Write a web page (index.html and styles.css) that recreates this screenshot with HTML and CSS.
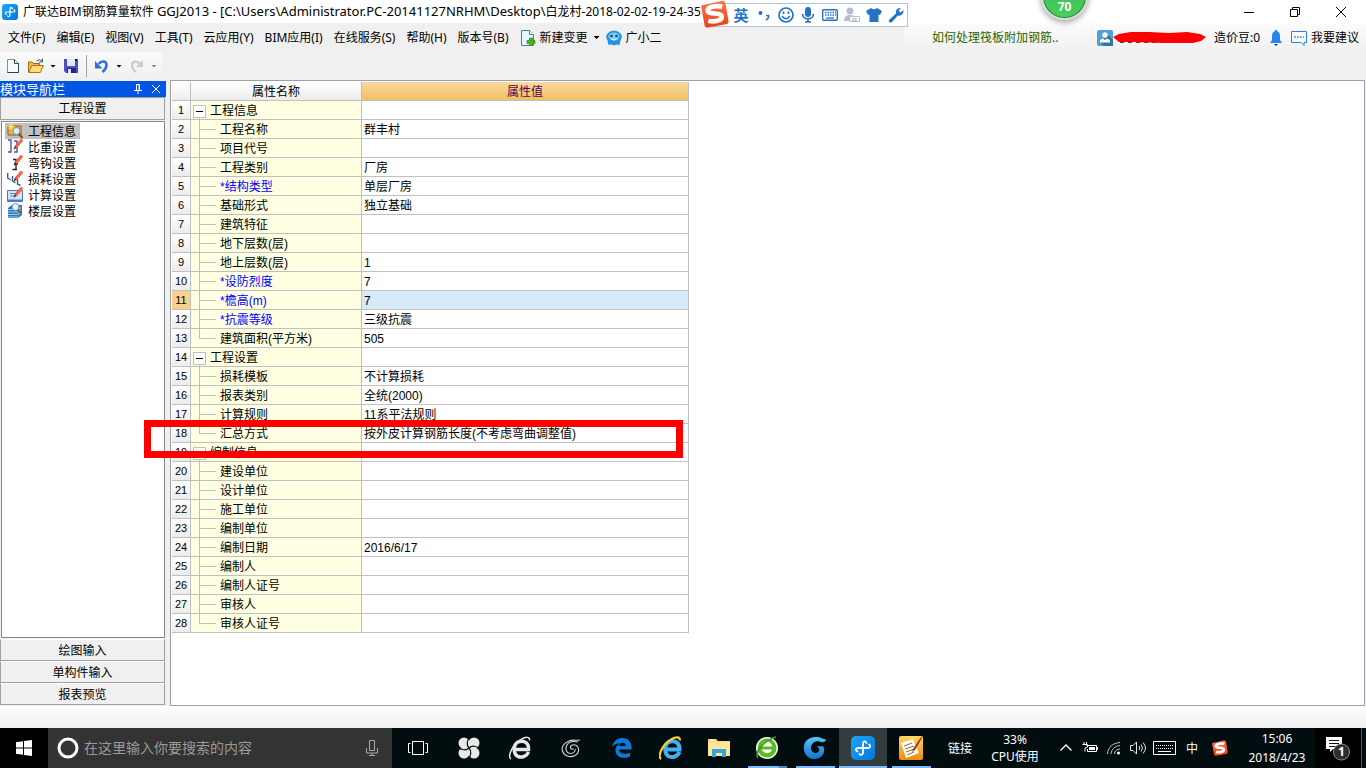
FILE: index.html
```html
<!DOCTYPE html>
<html lang="zh-CN">
<head>
<meta charset="utf-8">
<title>广联达BIM钢筋算量软件 GGJ2013</title>
<link rel="stylesheet" href="styles.css">
</head>
<body>
<svg class="defs" aria-hidden="true">
  <defs>
    <linearGradient id="g-app" x1="0" y1="0" x2="1" y2="1"><stop offset="0" stop-color="#1ea4fa"/><stop offset="1" stop-color="#0478d8"/></linearGradient>
    <linearGradient id="g-sogou" x1="0" y1="0" x2="0" y2="1"><stop offset="0" stop-color="#f77a4a"/><stop offset="1" stop-color="#ee3f13"/></linearGradient>
    <linearGradient id="g-blue" x1="0" y1="0" x2="0" y2="1"><stop offset="0" stop-color="#5cc4f5"/><stop offset="1" stop-color="#1173cf"/></linearGradient>
    <linearGradient id="g-note" x1="0" y1="0" x2="0" y2="1"><stop offset="0" stop-color="#ffd65c"/><stop offset="1" stop-color="#ee8a10"/></linearGradient>
    <symbol id="app" viewBox="0 0 24 24"><rect width="24" height="24" rx="5" fill="url(#g-app)"/><path d="M15.500 7C14.500 4.500 12 5 12 8v8.500c0 2.500-2.500 3-3.500 1.500M6.500 15.500C4 14.500 4.500 12 7 12h10c2.500 0 3-2.500 1-3.500" fill="none" stroke="#fff" stroke-width="1.800" stroke-linecap="round"/></symbol>
    <symbol id="sogou" viewBox="0 0 27 27"><path d="M1 5 20 1c2-.4 3 .4 3.500 2l3 17c.3 2-.6 3-2.500 3.500L7 26.500c-2 .4-3-.4-3.500-2L.5 8C.2 6.500 0 5.300 1 5Z" fill="url(#g-sogou)"/><path d="M20.500 6.500C14 5 6 7 6.500 10.500 7 14.500 19.500 11.500 20 16c.4 4-7 5.500-13 4" fill="none" stroke="#fff" stroke-width="4.500"/></symbol>
    <symbol id="pencil" viewBox="0 0 10 12"><path d="M8.500 0 10 2 3.500 9.500 1.500 8Z" fill="#ee4a30" stroke="#ee4a30"/><path d="M8.800 0 9.600 1 3 8.500" fill="none" stroke="#ff9a80"/><path d="M1.500 8 3.500 9.500 0 12Z" fill="#3a2a24"/></symbol>
  </defs>
</svg>

<header class="titlebar">
  <svg class="i16" viewBox="0 0 24 24"><use href="#app"/></svg>
  <h1>广联达BIM钢筋算量软件 <span class="path">GGJ2013 - [C:\Users\Administrator.PC-20141127NRHM\Desktop\</span>白龙村-2018-02-02-19-24-35</h1>
  <div class="winbtns">
    <button aria-label="最小化"><svg class="i12" viewBox="0 0 12 12"><path d="M1 6.500h10" stroke="#000"/></svg></button>
    <button aria-label="还原"><svg class="i12" viewBox="0 0 12 12"><path d="M1.500 3.500h7v7h-7zM3.500 3.500v-2h7v7h-2" fill="none" stroke="#000"/></svg></button>
    <button aria-label="关闭"><svg class="i12" viewBox="0 0 12 12"><path d="m1 1 10 10M11 1 1 11" stroke="#000"/></svg></button>
  </div>
</header>

<nav class="menubar">
  <div class="menus">
    <button>文件(F)</button><button>编辑(E)</button><button>视图(V)</button><button>工具(T)</button><button>云应用(Y)</button><button>BIM应用(I)</button><button>在线服务(S)</button><button>帮助(H)</button><button>版本号(B)</button>
    <button class="withicon"><svg class="i16" viewBox="0 0 16 16"><path d="M1.500.5h8l4 4v11h-12z" fill="#e9f6fc" stroke="#3b84b0"/><path d="M9.500.5v4h4" fill="#fff" stroke="#3b84b0"/><path d="M9.500 8h3v2.500H15v3h-2.500V16h-3v-2.500H7v-3h2.500z" fill="#4fae22" stroke="#2d7c10" stroke-width=".6"/></svg>新建变更<i class="caret"></i></button>
    <button class="withicon mascot"><svg class="i16" viewBox="0 0 16 16"><path d="M4 1.500 8 .5l4 1L15 4l1 3-1.500 3.500L13.500 15l-3-.5-2.500 1-2.500-1-3 .5-1-4.500L0 7l1-3Z" fill="#2591df"/><ellipse cx="8" cy="6.500" rx="5.500" ry="4" fill="#77cdf5"/><circle cx="5.500" cy="6" r="1.300" fill="#104a86"/><circle cx="10.500" cy="6" r="1.300" fill="#104a86"/><path d="M5.500 9q2.500 2 5 0" fill="none" stroke="#fff"/></svg>广小二</button>
  </div>
  <a class="news" href="#">如何处理筏板附加钢筋..</a>
  <div class="account">
    <svg class="i16" viewBox="0 0 16 16"><rect width="16" height="16" rx="2" fill="#4ba3d3"/><path d="m11 5 5 5v6H7l-4-4z" fill="#3176a0"/><circle cx="8" cy="5" r="2.700" fill="#fff"/><path d="M3 12.500V10l3-1.500 2 1.500 2-1.500 3 1.500v2.500z" fill="#fff"/></svg>
    <svg class="scribble" viewBox="0 0 94 12"><path d="M7 10.500h70" stroke="#445" stroke-dasharray="4 4"/><path d="M0 5 6 2 18 0h18l20 1 18-1 13 2 6 3-5 4-8 2H50l-30-1H6Z" fill="#f00"/></svg>
    <span class="beans">造价豆:0</span>
    <svg class="bell" viewBox="0 0 12 16"><path d="M6 0c1 0 1.500.7 1.500 1.500C9.500 2 10 4 10 6v4l2 3H0l2-3V6c0-2 .5-4 2.500-4.500C4.500.7 5 0 6 0Z" fill="#2786ee"/><path d="M4 14h4L6 16Z" fill="#0d3566"/></svg>
    <a class="advice" href="#"><svg class="i16" viewBox="0 0 16 16"><path d="M.5 1.500h15v11H13v3l-3-3H.5z" fill="#f5faff" stroke="#2b82dc"/><path d="M3 7h10" stroke="#1c5fae" stroke-dasharray="2 1"/></svg>我要建议</a>
  </div>
</nav>

<div class="toolbar">
  <button aria-label="新建"><svg class="i16" viewBox="0 0 16 16"><path d="M2.500 1.500h7l4 4v9h-11z" fill="#f6fbff" stroke="#7890a8"/><path d="M9.500 1.500v4h4v9h-11" fill="none" stroke="#2c4258"/></svg></button>
  <button aria-label="打开"><svg class="i16" viewBox="0 0 16 16"><path d="M.5 14V4h4l1 1.500h6V14Z" fill="#eebb44" stroke="#9a6b12"/><path d="m.8 14.500 3-7h11.500l-3 7z" fill="#ffdc78" stroke="#a87510"/><path d="M8.500 3q3-3 5.500 0M14.500.5V4H11" fill="none" stroke="#385878"/></svg><i class="caret"></i></button>
  <button aria-label="保存"><svg class="i16" viewBox="0 0 16 16"><path d="M1 1h14v14H3l-2-2z" fill="#4a4fc8"/><path d="M4 1h8v7H4z" fill="#e3e9fb"/><path d="M12 1h2v2h-2z" fill="#141550"/><path d="M4 10h9v5H4z" fill="#222a70"/><path d="M5 11h3v4H5z" fill="#dde"/></svg></button>
  <span class="sep"></span>
  <button aria-label="撤销"><svg class="i16" viewBox="0 0 16 16"><path d="M4.500 6C8 2 12.500 3 12.500 7c0 2.500-1.500 5-4 7" fill="none" stroke="#2f72d0" stroke-width="2.600"/><path d="M1 3v7.500h7.500z" fill="#2f72d0"/></svg><i class="caret"></i></button>
  <button aria-label="恢复"><svg class="i16" viewBox="0 0 16 16"><path d="M11 6C8 2.500 3 3 3 7c0 2.500 1.500 5 4 7" fill="none" stroke="#cbcbcb" stroke-width="2.200"/><path d="M14 2v7H7z" fill="#cbcbcb"/></svg><i class="caret off"></i></button>
</div>

<main class="work">
  <aside class="side">
    <div class="sidehead"><h2>模块导航栏</h2>
      <button aria-label="固定"><svg class="i10" viewBox="0 0 10 10"><path d="M3.500 6V.5h3V6M1 6.500h8M5 6.500V10M6 1v5" fill="none" stroke="#fff"/></svg></button>
      <button aria-label="关闭"><svg class="i10" viewBox="0 0 10 10"><path d="m1 1 8 8M9 1 1 9" stroke="#fff"/></svg></button>
    </div>
    <button class="tab top">工程设置</button>
    <ul class="items">
      <li><a class="on" href="#"><svg class="i16" viewBox="0 0 16 16"><path d="M1 3h13v9H1z" fill="#e6b250" stroke="#9a5c12"/><path d="M4 0v7M.5 3.500h7M1.500 1l5 5M6.500 1l-5 5" stroke="#fff064"/><circle cx="9.500" cy="8" r="3.500" fill="#dceefa" stroke="#6d93b8"/><path d="m12 11 3.500 4" stroke="#8a4a10" stroke-width="2"/></svg><span>工程信息</span></a></li>
      <li><a href="#"><svg class="i16" viewBox="0 0 16 16"><path d="M1 1h3v12H1M7 2h3v11H7" fill="none" stroke="#3b5f9c" stroke-width="1.400"/><use href="#pencil" x="6" y="0" width="10" height="11"/></svg><span>比重设置</span></a></li>
      <li><a href="#"><svg class="i16" viewBox="0 0 16 16"><path d="M6 4.500h3v10M5.500 14.500H10M7 9h4" fill="none" stroke="#222" stroke-width="1.300"/><use href="#pencil" x="6" y="0" width="10" height="11"/></svg><span>弯钩设置</span></a></li>
      <li><a href="#"><svg class="i16" viewBox="0 0 16 16"><path d="M.7 2v5l3 2M5.500 5v5l3 2M10.500 8v5l3 1.500" fill="none" stroke="#3b5f9c" stroke-width="1.400"/><use href="#pencil" x="6" y="0" width="10" height="11"/></svg><span>损耗设置</span></a></li>
      <li><a href="#"><svg class="i16" viewBox="0 0 16 16"><path d="M.5 3.500h15v11H.5z" fill="#d3e4fa" stroke="#4d78b4"/><path d="M1 13.500h14" stroke="#477ec8" stroke-width="2"/><path d="M3 6.500h5M3 9h4" stroke="#5c83bc"/><use href="#pencil" x="6" y="0" width="10" height="11"/></svg><span>计算设置</span></a></li>
      <li><a href="#"><svg class="i16" viewBox="0 0 16 16"><path d="M1 5 5 2h10v10l-4 3H1z" fill="#2a78c0"/><path d="M1 6.500h10l3-2M1 9h10l3-2M1 11.500h10l3-2M1 14h10" fill="none" stroke="#9ad2f3" stroke-width="1.200"/><circle cx="8.500" cy="4" r="3.500" fill="#e6f0f6" stroke="#7590a4"/><path d="m11 7 3 3" stroke="#864c1b" stroke-width="2"/></svg><span>楼层设置</span></a></li>
    </ul>
    <div class="tabs">
      <button class="tab">绘图输入</button>
      <button class="tab">单构件输入</button>
      <button class="tab">报表预览</button>
    </div>
  </aside>

  <section class="sheet">
    <table>
      <colgroup><col class="c-no"><col class="c-name"><col class="c-value"></colgroup>
      <thead><tr><th></th><th>属性名称</th><th class="cur">属性值</th></tr></thead>
      <tbody>
        <tr class="group"><th>1</th><td><button aria-label="折叠"></button>工程信息</td><td></td></tr>
        <tr><th>2</th><td>工程名称</td><td>群丰村</td></tr>
        <tr><th>3</th><td>项目代号</td><td></td></tr>
        <tr><th>4</th><td>工程类别</td><td>厂房</td></tr>
        <tr class="key"><th>5</th><td>*结构类型</td><td>单层厂房</td></tr>
        <tr><th>6</th><td>基础形式</td><td>独立基础</td></tr>
        <tr><th>7</th><td>建筑特征</td><td></td></tr>
        <tr><th>8</th><td>地下层数(层)</td><td></td></tr>
        <tr><th>9</th><td>地上层数(层)</td><td>1</td></tr>
        <tr class="key"><th>10</th><td>*设防烈度</td><td>7</td></tr>
        <tr class="key sel"><th>11</th><td>*檐高(m)</td><td>7</td></tr>
        <tr class="key"><th>12</th><td>*抗震等级</td><td>三级抗震</td></tr>
        <tr class="last"><th>13</th><td>建筑面积(平方米)</td><td>505</td></tr>
        <tr class="group"><th>14</th><td><button aria-label="折叠"></button>工程设置</td><td></td></tr>
        <tr><th>15</th><td>损耗模板</td><td>不计算损耗</td></tr>
        <tr><th>16</th><td>报表类别</td><td>全统(2000)</td></tr>
        <tr><th>17</th><td>计算规则</td><td>11系平法规则</td></tr>
        <tr class="last"><th>18</th><td>汇总方式</td><td>按外皮计算钢筋长度(不考虑弯曲调整值)</td></tr>
        <tr class="group"><th>19</th><td><button aria-label="折叠"></button>编制信息</td><td></td></tr>
        <tr><th>20</th><td>建设单位</td><td></td></tr>
        <tr><th>21</th><td>设计单位</td><td></td></tr>
        <tr><th>22</th><td>施工单位</td><td></td></tr>
        <tr><th>23</th><td>编制单位</td><td></td></tr>
        <tr><th>24</th><td>编制日期</td><td>2016/6/17</td></tr>
        <tr><th>25</th><td>编制人</td><td></td></tr>
        <tr><th>26</th><td>编制人证号</td><td></td></tr>
        <tr><th>27</th><td>审核人</td><td></td></tr>
        <tr class="last"><th>28</th><td>审核人证号</td><td></td></tr>
      </tbody>
    </table>
    <div class="marker"></div>
  </section>
</main>
<div class="statusbar"></div>

<footer class="taskbar">
  <button class="start" aria-label="开始"><svg class="i16" viewBox="0 0 16 16"><path d="M0 2.200 7 1.200v6.300H0zM8 1l8-1v7.500H8zM0 8.500h7v6.300l-7-1zM8 8.500h8V16l-8-1z" fill="#fff"/></svg></button>
  <label class="search">
    <svg class="ring" viewBox="0 0 22 22"><circle cx="11" cy="11" r="9" fill="none" stroke="#fff" stroke-width="3"/></svg>
    <input type="text" aria-label="搜索" placeholder="在这里输入你要搜索的内容">
    <svg class="i16" viewBox="0 0 16 16"><path d="M5.500.5h5v10h-5zM2.500 8v5h11V8M8 13v2.500M5 15.500h6" fill="none" stroke="#a8a8a8"/></svg>
  </label>
  <div class="pins">
    <button aria-label="任务视图"><svg class="i20" viewBox="0 0 20 20"><path d="M4.500 3.500h11v13h-11zM2.500 5.500h-2v9h2M17.500 5.500h2v9h-2" fill="none" stroke="#fff"/></svg></button>
    <button aria-label="四叶"><svg class="i24" viewBox="0 0 24 24"><g fill="#e8e8e8"><circle cx="7" cy="7" r="5.500"/><circle cx="17" cy="7" r="5.500"/><circle cx="7" cy="17" r="5.500"/><circle cx="17" cy="17" r="5.500"/><path d="M7 4h10v16H7z"/></g><path d="M12 12C9 9 10 4 13 1M12 12c3-3 8-2 11 1M12 12c3 3 2 8-1 11M12 12c-3 3-8 2-11-1" fill="none" stroke="#081012" stroke-width="1.200"/></svg></button>
    <button aria-label="浏览器"><svg class="i24" viewBox="0 0 24 24"><path d="M20.500 16C19 20 14 22 10 20.500c-5-2.500-5-12 0-14.500 6-2.500 11 1 10.500 7.500H7" fill="none" stroke="#e8e8e8" stroke-width="3.500"/><path d="M3 23C-1 20 5 8 13 3.500c5-3 9-3 8.500 1" fill="none" stroke="#e8e8e8" stroke-width="1.500"/></svg></button>
    <button aria-label="旋风"><svg class="i20" viewBox="0 0 20 20"><path d="M19 2c-4 1-7-1-11 1C3 5 0 9 1.500 13 3 18 9 20 14 17.500c5-3 4.500-9 0-10.500-3-.8-5 1-4.500 3 .5 1.500 2.500 1.500 3 .5M17 4C12 3 7 4 5.500 8 4 12 6 15.500 9.500 15.500c3.500 0 5-2.500 4.500-4.500" fill="none" stroke="#d6d6d6" stroke-width="1.100"/></svg></button>
    <button aria-label="Edge"><svg class="i20" viewBox="0 0 20 20"><path d="M0 9C1.500 2.500 6 0 10.500 0 16.500 0 20 4.500 19.500 11.500H7c0 4 6 6 11 3v4C13 21 4 20.500 3.500 13 3.200 9 6 6.500 8 5.500 4.500 5 2 6.500 0 9Zm7-1h7c0-4-6-4.500-7 0Z" fill="#0c78d7"/></svg></button>
  </div>
  <div class="apps">
    <button aria-label="Internet Explorer"><svg class="i24" viewBox="0 0 24 24"><path d="M20.500 16C19 20 14 22 10 20.500c-5-2.500-5-12 0-14.500 6-2.500 11 1 10.500 7.500H7" fill="none" stroke="#41b1ef" stroke-width="4"/><path d="M2 23C-2 20 4 8 12 3.500c5-3 9-3 9 1" fill="none" stroke="#f8cd2d" stroke-width="2.200"/></svg></button>
    <button aria-label="资源管理器"><svg class="i24" viewBox="0 0 24 24"><path d="M1 3h8l2 2h12v15H1z" fill="#f6d77c"/><path d="M1 6h22v14H1z" fill="#ffe79a"/><path d="M5 21v-8h14v8h-4v-4H9v4z" fill="#35a5dc"/><path d="M3 4h4" stroke="#fff"/></svg></button>
    <button class="run multi" aria-label="安全浏览器"><svg class="i24" viewBox="0 0 24 24"><circle cx="12" cy="12" r="11" fill="#f4fbee"/><circle cx="12" cy="12" r="9.500" fill="#5abb26"/><path d="M7 10.500a5 5 0 0 1 10 0ZM7 13.500h10c-1.500 5-8.500 5-10 0Z" fill="#fff"/><path d="M3 22C-1 16 10 4 21 1" fill="none" stroke="#3f9d1a" stroke-width="1.600"/></svg></button>
    <button class="run" aria-label="广联达"><svg class="i24" viewBox="0 0 24 24"><path d="M23 3c-3 1-4-2-10-2C5 1 0 6 1 14c1 6 6 10 12 9 7-1 10-8 7-13-2 1-4 0-6 0 1 2 3 2 2 5-2 4-8 2-8-3s5-8 10-6c3 1 5-1 5-3Z" fill="url(#g-blue)"/></svg></button>
    <button class="run active" aria-label="钢筋算量"><svg class="i24" viewBox="0 0 24 24"><use href="#app"/></svg></button>
    <button class="run" aria-label="便笺"><svg class="i24" viewBox="0 0 24 24"><rect width="24" height="24" rx="2" fill="url(#g-note)"/><path d="m2 7 12-4 6 14-13 5z" fill="#fffdf1"/><path d="m5 10 8-3M6 13l9-3M7 16l8-3M8 19l7-3" stroke="#8c6a40"/><path d="m22 1-8 12-1 3 3-2 7-12z" fill="#9c3614"/></svg></button>
  </div>
  <a class="links" href="#">链接</a>
  <div class="cpu">33%<br>CPU使用</div>
  <div class="tray">
    <button aria-label="显示隐藏的图标"><svg class="i16" viewBox="0 0 16 16"><path d="m2.500 10.500 5.500-5.500 5.500 5.500" fill="none" stroke="#fff" stroke-width="1.300"/></svg></button>
    <button aria-label="电池"><svg class="i16" viewBox="0 0 16 16"><path d="M4.500 5.500h10v6h-9V9M2 2v3M4.500 2v3M.5 4.500h5V7L3 8v3.500" fill="none" stroke="#fff"/><path d="M7 7h6v3H7zM15 7h1v3h-1z" fill="#fff"/></svg></button>
    <button aria-label="网络"><svg class="i16" viewBox="0 0 16 16"><path d="M1.500 14C2 7 7 3 14 2.500M5 14C5.500 9 9 6 14 5.500M8.500 14c0-3 2.500-5 5.500-5" fill="none" stroke="#c4c8c8"/><circle cx="12.500" cy="13" r="1.500" fill="#fff"/></svg></button>
    <button aria-label="音量"><svg class="i16" viewBox="0 0 16 16"><path d="M.5 5.500h2.500L6.500 2v12L3 10.500H.5zM9 6q1.500 2 0 4M11 4.500q3 3.500 0 7M13 2.500q5 5.500 0 11" fill="none" stroke="#e8e8e8"/></svg></button>
    <button class="wide" aria-label="键盘"><svg class="kb" viewBox="0 0 23 14"><path d="M.5.500h22v13H.5z" fill="none" stroke="#fff"/><path d="M3 4.500h17M3 7.500h17" stroke="#fff" stroke-dasharray="1 1"/><path d="M5 10.500h13" stroke="#fff"/></svg></button>
    <button class="wide">中</button>
    <button class="wide" aria-label="搜狗"><svg class="i16" viewBox="0 0 27 27"><use href="#sogou"/></svg></button>
  </div>
  <div class="clock">15:06<br>2018/4/23</div>
  <button class="notice" aria-label="通知"><svg viewBox="0 0 26 26"><path d="M1 2h16v12H8l-3 3v-3H1z" fill="#fff"/><path d="M4 5.500h10M4 8.500h10M4 11.500h6" stroke="#111"/><circle cx="16.500" cy="17" r="8" fill="#2d2d2d" stroke="#8c8c8c"/></svg><b>1</b></button>
</footer>

<div class="ime">
  <svg class="imelogo" viewBox="0 0 27 27"><use href="#sogou"/></svg>
  <button class="lang">英</button>
  <button aria-label="标点"><svg class="i16" viewBox="0 0 16 16"><circle cx="4.500" cy="6" r="2" fill="#2573c4"/><path d="M10 8.500h2.500c.5 2-.5 3.500-2.500 4.500" fill="none" stroke="#2573c4" stroke-width="1.600"/></svg></button>
  <button aria-label="表情"><svg class="i16" viewBox="0 0 16 16"><circle cx="8" cy="8" r="7" fill="none" stroke="#2573c4" stroke-width="1.700"/><path d="M4 9q4 5.500 8 0" fill="none" stroke="#2573c4" stroke-width="1.400"/><path d="M5.500 4.500v2.500M10.500 4.500v2.500" stroke="#2573c4" stroke-width="1.700"/></svg></button>
  <button aria-label="语音"><svg class="i16" viewBox="0 0 16 16"><rect x="5" width="6" height="10" rx="3" fill="#2573c4"/><path d="M2.500 7c0 6.500 11 6.500 11 0M8 12v3M5 15h6" fill="none" stroke="#2573c4" stroke-width="1.700"/></svg></button>
  <button aria-label="软键盘"><svg class="i16" viewBox="0 0 16 16"><rect x=".7" y="2.700" width="14.600" height="10.600" rx="1" fill="#fff" stroke="#2573c4" stroke-width="1.400"/><path d="M3 5.500h11M3 8h11" stroke="#2573c4" stroke-width="1.500" stroke-dasharray="1.500 1"/><path d="M4 11h8" stroke="#2573c4" stroke-width="1.300"/></svg></button>
  <button aria-label="账号"><svg class="i16" viewBox="0 0 16 16"><g fill="#b3bdd0"><circle cx="6" cy="4" r="3.500"/><path d="M0 14c0-5 3-6 6-6s4 1 4 1v5Z"/></g><path d="M5.500 9.500h10v5h-10zM8 11.500h2v2H8M13 11.500h-2v2h2" fill="#fff" stroke="#b3bdd0"/></svg></button>
  <button aria-label="皮肤"><svg class="i16" viewBox="0 0 16 16"><path d="M5 1q3 2.500 6 0l5 3-2 4-1.500-.5V15h-9V7.500L2 8 0 4Z" fill="#2573c4"/></svg></button>
  <button aria-label="工具"><svg class="i16" viewBox="0 0 16 16"><path d="M1 13 8 6.500C7 3 9.500.5 13 1l-2.500 2.500 2 2L15.500 3C16 7 13 9.500 9.800 8.500L4 15c-2 1.500-4-.5-3-2Z" fill="#2573c4"/></svg></button>
</div>
<div class="ball">70</div>
</body>
</html>
```
FILE: styles.css
```css
* { box-sizing: border-box; }
body {
  margin: 0;
  height: 100vh;
  display: flex;
  flex-direction: column;
  overflow: hidden;
  position: relative;
  background: #f0f0f0;
  color: #000;
  font: 12px/18px "Noto Sans", "Noto Sans CJK SC", sans-serif;
}
button {
  margin: 0;
  padding: 0;
  border: 0;
  background: none;
  color: inherit;
  font: inherit;
  white-space: nowrap;
}
a { color: inherit; text-decoration: none; }
svg { display: block; flex: none; }
h1, h2 { margin: 0; font: inherit; }
.defs { position: absolute; width: 0; height: 0; }
.i10 { width: 10px; height: 10px; }
.i12 { width: 12px; height: 12px; }
.i16 { width: 16px; height: 16px; }
.i20 { width: 20px; height: 20px; }
.i24 { width: 24px; height: 24px; }
.kb { width: 23px; height: 14px; }
.caret {
  width: 6px;
  height: 3px;
  background: #000;
  clip-path: polygon(0 0, 100% 0, 50% 100%);
}
.caret.off { background: #888; }

.titlebar {
  flex: none;
  display: flex;
  align-items: center;
  gap: 5px;
  height: 23px;
  padding-left: 2px;
  background: #fff;
}
.titlebar h1 { white-space: nowrap; flex: 1; }
.path { font-size: 13px; }
.winbtns { display: flex; align-items: center; padding-right: 2px; }
.winbtns button { width: 46px; height: 20px; display: grid; place-items: center; }

.menubar { flex: none; display: flex; height: 29px; }
.menus { flex: 1; display: flex; align-items: center; gap: 11px; padding-left: 8px; }
.withicon { display: flex; align-items: center; gap: 4px; }
.withicon .caret { margin-left: 2px; }
.mascot { margin-left: -5px; }
.news, .account {
  display: flex;
  align-items: center;
  background: linear-gradient(#fcfcfc, #f0f0f0);
  white-space: nowrap;
}
.news { width: 188px; padding-left: 28px; margin-right: 1px; color: #2b6400; }
.account { width: 273px; padding-left: 4px; }
.scribble { width: 94px; height: 12px; }
.beans { margin-left: 7px; }
.bell { width: 12px; height: 16px; margin: 0 9px 0 10px; }
.advice { display: flex; align-items: center; gap: 4px; }

.toolbar {
  flex: none;
  align-self: flex-start;
  display: flex;
  align-items: center;
  gap: 7px;
  height: 28px;
  padding: 0 6px 0 5px;
  background: linear-gradient(#fafafa, #f0f0f0);
}
.toolbar button { display: flex; align-items: center; gap: 6px; }
.sep { width: 1px; height: 22px; background: #a0a0a0; }

.work { flex: 1; min-height: 0; display: flex; gap: 4px; padding-right: 1px; }
.side { width: 166px; flex: none; display: flex; flex-direction: column; padding: 1px 1px 1px 0; }
.sidehead {
  display: flex;
  align-items: center;
  gap: 8px;
  height: 16px;
  margin-right: -1px;
  padding-right: 5px;
  background: #0055e5;
  color: #fff;
}
.sidehead h2 { flex: 1; font-size: 13px; line-height: 16px; }
.tab {
  display: block;
  width: 100%;
  height: 22px;
  padding-top: 1px;
  border: 1px solid #a0a0a0;
  border-top-color: #fff;
  background: #f0f0f0;
  text-align: center;
}
.tab.top { height: 23px; border-top-color: #a0a0a0; }
.items {
  flex: 1;
  list-style: none;
  margin: 1px 0 1px 1px;
  padding: 1px 3px;
  border: 1px solid #828790;
  background: #fff;
}
.items a { display: flex; align-items: center; width: 75px; height: 16px; padding-left: 2px; }
.items span { padding: 1px 0 0 5px; line-height: 16px; }
.items .on { background: #c0c0c0; }

.sheet {
  flex: 1;
  position: relative;
  border: 1px solid #a0a0a8;
  padding: 1px;
  background: #fff;
}
table {
  border-collapse: separate;
  border-spacing: 0;
  table-layout: fixed;
  width: 517px;
  font-family: "Liberation Sans", "Noto Sans CJK SC", sans-serif;
}
.c-no { width: 19px; }
.c-name { width: 171px; }
.c-value { width: 327px; }
th, td {
  height: 19px;
  padding: 0;
  border: solid #c0c0c0;
  border-width: 0 1px 1px 0;
  font-weight: 400;
  line-height: 16px;
  white-space: nowrap;
}
th { background: linear-gradient(#fff, #ececec); }
thead th { padding-top: 2px; }
tbody th { font-size: 11px; }
th.cur { background: linear-gradient(#f9d9a0, #f0c060); color: #5a0050; }
td:nth-child(2) {
  padding: 2px 0 0 29px;
  background:
    linear-gradient(#c0c0c0, #c0c0c0) 8px 0 / 1px 100% no-repeat,
    linear-gradient(#c0c0c0, #c0c0c0) 9px 9px / 16px 1px no-repeat,
    #ffffe1;
}
td:nth-child(3) { padding: 2px 0 0 2px; }
.last td:nth-child(2) { background-size: 1px 10px, 16px 1px, auto; }
.group td:nth-child(2) {
  padding-left: 2px;
  background: linear-gradient(#c0c0c0, #c0c0c0) 8px 16px / 1px 3px no-repeat, #ffffe1;
}
.group button {
  width: 13px;
  height: 13px;
  margin-right: 4px;
  border: 1px solid #c0c0c0;
  background: linear-gradient(#000, #000) center / 7px 1px no-repeat #fff;
  vertical-align: middle;
}
.key td:nth-child(2) { color: #00f; }
.sel th { background: #f9d08c; }
.sel td:nth-child(3) { background: #d8e9f8; }
.marker {
  position: absolute;
  left: -27px;
  top: 339px;
  width: 539px;
  height: 38px;
  border: 7px solid #f00;
}

.statusbar { flex: none; height: 22px; background: linear-gradient(#fdfdfd, #f0f0f0); }

.taskbar {
  flex: none;
  display: flex;
  align-items: stretch;
  height: 40px;
  background: #020d10;
  color: #fff;
  line-height: 17px;
}
.taskbar > * { flex: none; }
.taskbar button { display: grid; place-items: center; }
.start { width: 48px; background: #000; }
.search {
  width: 344px;
  display: flex;
  align-items: center;
  gap: 5px;
  padding: 0 12px 0 9px;
  background: #333;
}
.ring { width: 22px; height: 22px; }
.search input {
  flex: 1;
  min-width: 0;
  padding: 0;
  border: 0;
  background: none;
  color: #fff;
  font: 14px/20px "Noto Sans", "Noto Sans CJK SC", sans-serif;
}
.search input::placeholder { color: #9a9a9a; opacity: 1; }
.pins, .apps { display: flex; }
.pins button { width: 51px; }
.apps button { width: 48px; }
.run { background: linear-gradient(#76b9ff, #76b9ff) center bottom / 39px 2px no-repeat; }
.apps .multi { background-image: linear-gradient(90deg, #76b9ff 31px, #5285bd 31px); }
.apps .active { background-color: #333d40; background-size: 100% 2px; }
.links { align-self: center; margin-left: 13px; }
.cpu, .clock { align-self: center; text-align: center; white-space: nowrap; }
.cpu { width: 82px; margin-left: 2px; margin-right: -2px; }
.taskbar .tray { flex: 1; display: flex; }
.tray button { width: 24px; }
.tray .wide { width: 28px; }
.clock { width: 76px; line-height: 19px; }
.notice { width: 47px; position: relative; background: #000; border-right: 1px solid #555; margin-right: 4px; }
.notice svg { width: 26px; height: 26px; }
.notice b { position: absolute; left: 23px; top: 15px; }

.ime {
  position: absolute;
  left: 713px;
  top: 3px;
  display: flex;
  align-items: center;
  gap: 6px;
  height: 24px;
  padding: 0 3px 0 18px;
  border: 1px solid #b4c2d4;
  background: #fff;
}
.imelogo { position: absolute; left: -13px; top: -4px; width: 28px; height: 28px; }
.lang { width: 18px; color: #2573c4; font-size: 15px; font-weight: 700; }
.ball {
  position: absolute;
  left: 1041px;
  top: -27px;
  width: 47px;
  height: 47px;
  padding-top: 23px;
  border: 2px solid #d8d8d8;
  border-radius: 50%;
  background: linear-gradient(#35b558, #4ccf5c);
  box-shadow: inset 0 0 0 1px #22833c, 0 2px 6px #0006;
  color: #fff;
  font-weight: 700;
  text-align: center;
}
```
